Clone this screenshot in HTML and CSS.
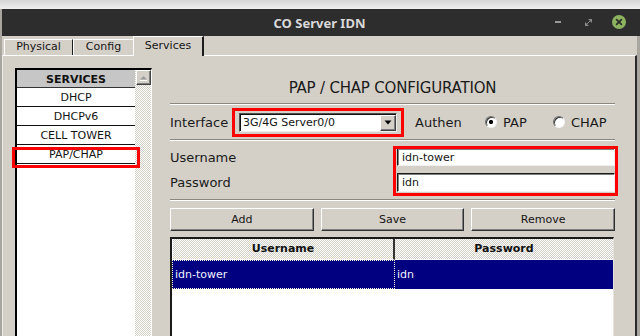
FILE: index.html
```html
<!DOCTYPE html>
<html>
<head>
<meta charset="utf-8">
<title>CO Server IDN</title>
<link rel="stylesheet" href="styles.css">
</head>
<body>
<div class="topstrip"></div>
<div class="window">
  <div class="titlebar">
    <div class="title">CO Server IDN</div>
    <div class="controls">
      <span class="min"></span>
      <svg class="max" width="7" height="7" viewBox="0 0 7 7"><path d="M3 0H7V4Z M0 3V7H4Z" fill="#8a8a8a"/><path d="M1.5 5.5L5.5 1.5" stroke="#8a8a8a" stroke-width="1"/></svg>
      <svg class="close" width="14" height="14" viewBox="0 0 14 14"><circle cx="7" cy="7" r="7" fill="#8db35f"/><path d="M4.6 4.6L9.4 9.4M9.4 4.6L4.6 9.4" stroke="#2b2b2b" stroke-width="1.7" stroke-linecap="round"/></svg>
    </div>
  </div>
  <div class="tabs">
    <div class="tab tab-physical">Physical</div>
    <div class="tab tab-config">Config</div>
    <div class="tab tab-services active">Services</div>
  </div>
  <div class="panel">
    <div class="svc-list">
      <div class="svc-items">
        <div class="svc-head">SERVICES</div>
        <div class="svc-item">DHCP</div>
        <div class="svc-item">DHCPv6</div>
        <div class="svc-item">CELL TOWER</div>
        <div class="svc-item hl-wrap">PAP/CHAP<span class="hl hl-item"></span></div>
      </div>
      <div class="scrollbar">
        <div class="scroll-up"><svg width="13" height="13" viewBox="0 0 13 13"><path d="M3 8.5L6.5 5L10 8.5Z" fill="#9c9c9c"/><path d="M3 9.5H10" stroke="#fff" stroke-width="1"/></svg></div>
      </div>
    </div>
    <div class="config">
      <div class="cfg-title">PAP / CHAP CONFIGURATION</div>
      <div class="sep"></div>
      <div class="iface-row">
        <span class="lbl iface-lbl">Interface</span>
        <div class="combo hl-wrap">
          <span class="combo-text">3G/4G Server0/0</span>
          <span class="combo-btn"><svg width="8" height="5" viewBox="0 0 8 5"><path d="M0.5 0.5H7.5L4 4.5Z" fill="#000"/></svg></span>
          <span class="hl hl-combo"></span>
        </div>
        <span class="lbl authen">Authen</span>
        <span class="radio on"></span><span class="lbl rlbl rlbl-pap">PAP</span>
        <span class="radio"></span><span class="lbl rlbl">CHAP</span>
      </div>
      <div class="sep"></div>
      <div class="cred">
        <span class="lbl">Username</span>
        <div class="field">idn-tower</div>
        <span class="lbl">Password</span>
        <div class="field">idn</div>
        <span class="hl hl-fields"></span>
      </div>
      <div class="sep sep3"></div>
      <div class="buttons">
        <div class="btn">Add</div>
        <div class="btn">Save</div>
        <div class="btn">Remove</div>
      </div>
      <div class="table">
        <div class="th th-first">Username</div>
        <div class="th">Password</div>
        <div class="td sel focus">idn-tower</div>
        <div class="td sel td-second">idn</div>
      </div>
    </div>
  </div>
</div>
</body>
</html>
```
FILE: styles.css
```css
* { box-sizing: border-box; }
html, body { margin: 0; padding: 0; }
body {
  width: 640px;
  height: 336px;
  overflow: hidden;
  background: #a9a69f;
  font-family: "DejaVu Sans", sans-serif;
  font-size: 11px;
  color: #151515;
}
.topstrip { height: 9px; background: linear-gradient(#d6d6d6, #efefef); }
.window { margin-left: 2px; width: 638px; }

.titlebar {
  height: 27px;
  background: #2d2d2d;
  display: grid;
  grid-template-columns: 1fr auto 1fr;
  align-items: center;
}
.title {
  grid-column: 2;
  font-family: "Noto Sans", sans-serif;
  font-weight: 700;
  font-size: 13px;
  color: #d9d9d9;
  margin-right: 3px;
}
.controls {
  grid-column: 3;
  justify-self: end;
  display: flex;
  align-items: center;
  padding-right: 14px;
  margin-bottom: 1px;
}
.min { width: 6px; height: 2px; background: #9a9a9a; margin-right: 24px; }
.max { margin-right: 20px; }
.close { display: block; }

.tabs {
  height: 19px;
  display: flex;
  align-items: flex-end;
  padding-left: 2px;
  margin-right: 3px;
  background: #d4d0c8;
}
.tab {
  height: 16px;
  border-top: 1px solid #fff;
  border-left: 1px solid #fff;
  line-height: 14px;
  text-align: center;
  font-size: 11px;
  color: #151515;
}
.tab-physical { width: 69px; border-right: 1px solid #1c1c1c; }
.tab-config { width: 60px; }
.tab-services { width: 71px; }
.tab.active {
  height: 20px;
  margin-bottom: -1px;
  line-height: 17px;
  background: #d4d0c8;
  border-right: 2px solid #1c1c1c;
  position: relative;
  z-index: 1;
}

.panel {
  height: 290px;
  margin-right: 3px;
  border-top: 1px solid #fff;
  border-left: 1px solid #ece9e2;
  border-right: 2px solid #2a2a2a;
  background: #d4d0c8;
  display: flex;
  align-items: flex-start;
  padding-left: 12px;
}

.svc-list {
  margin-top: 12px;
  width: 137px;
  height: 300px;
  display: flex;
  border-top: 2px solid #000;
  border-left: 2px solid #000;
  border-right: 1px solid #fff;
  background: #fff;
}
.svc-items { width: 118px; }
.svc-head {
  height: 18px;
  line-height: 18px;
  padding-top: 1px;
  background: #c6c6c6;
  border-bottom: 1px solid #333;
  text-align: center;
  font-weight: 700;
  color: #111;
}
.svc-item {
  height: 19px;
  line-height: 18px;
  padding-top: 1px;
  border-bottom: 1px solid #111;
  text-align: center;
  color: #151515;
}
.hl-wrap { position: relative; }
.hl { position: absolute; border: 3px solid #ff0000; z-index: 2; pointer-events: none; }
.hl-item { top: 2px; right: -5px; bottom: -5px; left: -5px; }

.scrollbar {
  width: 16px;
  background-color: #fff;
  background-image: repeating-conic-gradient(#d4d0c8 0 25%, #fff 0 50%);
  background-size: 2px 2px;
}
.scroll-up {
  width: 15px;
  height: 15px;
  margin-left: 1px;
  background: #d4d0c8;
  border: 1px solid;
  border-color: #fff #404040 #404040 #fff;
  box-shadow: inset -1px -1px #808080;
}
.scroll-up svg { display: block; }

.config { margin-left: 18px; width: 445px; }
.cfg-title {
  margin-top: 22px;
  height: 20px;
  line-height: 20px;
  font-size: 15px;
  letter-spacing: -0.2px;
  text-align: center;
  color: #1a1a1a;
  margin-bottom: 5px;
}
.sep { height: 2px; border-top: 1px solid #8a877f; border-bottom: 1px solid #fff; }

.lbl { font-size: 13px; color: #1a1a1a; white-space: nowrap; }
.iface-row { height: 34px; display: flex; align-items: center; }
.iface-lbl { width: 69px; }
.combo {
  width: 158px;
  height: 19px;
  display: flex;
  background: #fff;
  border: 1px solid;
  border-color: #505050 #ededed #ededed #505050;
  box-shadow: inset 1px 1px #111;
}
.combo-text { flex: 1; padding-left: 3px; padding-top: 1px; line-height: 16px; font-size: 11px; }
.combo-btn {
  width: 16px;
  height: 16px;
  margin: 1px 0 0 0;
  background: #d4d0c8;
  border: 1px solid;
  border-color: #fff #404040 #404040 #fff;
  box-shadow: inset -1px -1px #808080;
  display: flex;
  align-items: center;
  justify-content: center;
}
.combo-btn svg { display: block; }
.hl-combo { top: -6px; right: -8px; bottom: -6px; left: -8px; }
.authen { margin-left: 18px; width: 70px; }
.radio {
  flex: none;
  width: 12px;
  height: 12px;
  border-radius: 50%;
  border: 1px solid;
  border-color: #707070 #f6f6f6 #f6f6f6 #707070;
  background: #fff;
  box-shadow: inset 1px 1px 0 #3a3a3a;
}
.radio.on { background: radial-gradient(circle, #000 0 1.8px, #fff 2.4px); }
.rlbl { margin-left: 6px; }
.rlbl-pap { width: 50px; }

.cred {
  position: relative;
  margin: 7px 0;
  display: grid;
  grid-template-columns: 1fr 218px;
  grid-template-rows: 18px 19px;
  row-gap: 7px;
  align-items: center;
}
.field {
  height: 100%;
  background: #fff;
  border: 1px solid;
  border-color: #1a1a1a #f0f0f0 #f0f0f0 #1a1a1a;
  box-shadow: inset 1px 1px #808080;
  padding-left: 4px;
  font-size: 11px;
  display: flex;
  align-items: center;
}
.hl-fields { grid-column: 2; grid-row: 1 / 3; top: -2px; right: -3px; bottom: -4px; left: -4px; }

.buttons {
  margin-top: 7px;
  display: grid;
  grid-template-columns: repeat(3, 1fr);
  column-gap: 7px;
}
.btn {
  height: 23px;
  display: flex;
  align-items: center;
  justify-content: center;
  background: #d4d0c8;
  border: 1px solid;
  border-color: #fff #303030 #303030 #fff;
  box-shadow: inset -1px -1px #808080;
  color: #151515;
}

.table {
  margin-top: 6px;
  height: 110px;
  width: 444px;
  background: #fff;
  border-top: 2px solid #1a1a1a;
  border-left: 2px solid #1a1a1a;
  border-right: 1px solid #e6e3dc;
  display: grid;
  grid-template-columns: 223px 1fr;
  grid-template-rows: 21px 29px;
  align-content: start;
}
.th {
  background-color: #fff;
  background-image: repeating-conic-gradient(#d4d0c8 0 25%, #fff 0 50%);
  background-size: 2px 2px;
  border-bottom: 1px solid #fafafa;
  font-weight: 700;
  text-align: center;
  line-height: 20px;
  color: #111;
}
.th-first { border-left: 1px solid #fff; border-right: 2px solid #333; }
.td { display: flex; align-items: center; padding-left: 3px; }
.td.sel { background: #000080; color: #f2f2ff; }
.td.focus { border: 1px dotted #fffbe0; padding-left: 2px; }
.td-second { padding-left: 2px; }
```
